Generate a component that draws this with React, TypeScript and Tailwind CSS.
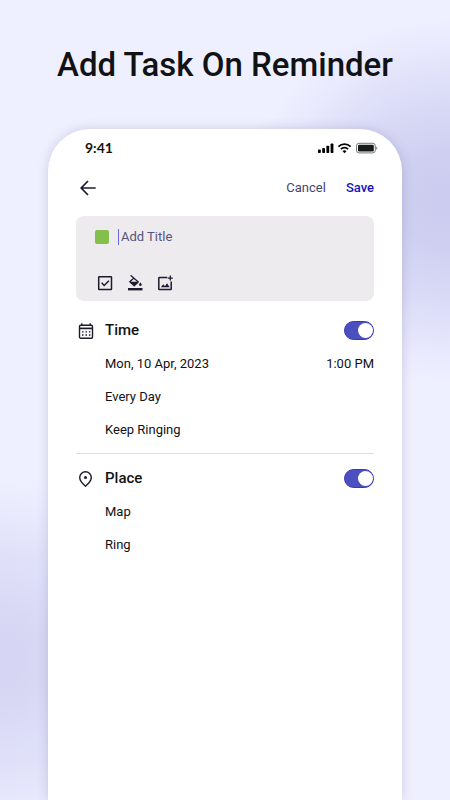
import { useState, type ReactNode } from "react";

const BackIcon = () => (
  <svg className="h-4 w-4" viewBox="0 0 16 16" fill="none" stroke="#1c1b2e" strokeWidth="1.7">
    <path d="M15.700 8H1.500M8 1L1.200 8 8 15" />
  </svg>
);

const CheckIcon = () => (
  <svg className="h-4 w-4" viewBox="0 0 16 16" fill="none" stroke="#1c1b2e" strokeWidth="1.5">
    <rect x="1.700" y="1.700" width="12.800" height="12.800" rx="0.600" />
    <path d="M4.600 7.800l2.600 2.700 4.700-4.700" />
  </svg>
);

const FillIcon = () => (
  <svg className="h-4 w-4" viewBox="0 0 16 16" fill="none" stroke="#1c1b2e" strokeWidth="1.3">
    <path d="M3.600 0.300L11.300 6.900 7.200 10.700 2.800 6.700 6.900 2.900" strokeLinejoin="round" />
    <path d="M2.900 6.700h8.200L7.200 10.500z" fill="#1c1b2e" stroke="none" />
    <path d="M13.400 7.600c0.900 1.100 1.300 1.700 1.300 2.200a1.300 1.300 0 0 1-2.600 0c0-0.500 0.400-1.100 1.300-2.200z" fill="#1c1b2e" stroke="none" />
    <path d="M1 14.200h14.500" strokeWidth="2.400" />
  </svg>
);

const AddPhotoIcon = () => (
  <svg className="h-4 w-4" viewBox="0 0 16 16" fill="none" stroke="#1c1b2e" strokeWidth="1.5">
    <path d="M10.300 2.400H2.400a0.600 0.600 0 0 0-0.600 0.600v11a0.600 0.600 0 0 0 0.600 0.600h11.200a0.600 0.600 0 0 0 0.600-0.600V6.600" />
    <path d="M13.300 0.600v5M10.800 3.100h5" strokeWidth="1.300" />
    <path d="M3.900 12.200l2.300-3 1.700 2 2.200-2.900 2.500 3.900z" fill="#1c1b2e" stroke="none" />
  </svg>
);

const CalendarIcon = () => (
  <svg className="h-4 w-4" viewBox="0 0 16 16" fill="none" stroke="#1c1b2e" strokeWidth="1.400">
    <rect x="1.500" y="2.200" width="13" height="13" rx="1.200" />
    <path d="M1.500 5.400h13" strokeWidth="1.700" />
    <path d="M3.800 0.200v2.400M12.200 0.200v2.400" />
    <path d="M4 8.900h8.400M4 12h8.400" strokeDasharray="1.500 1.950" />
  </svg>
);

const PinIcon = () => (
  <svg className="h-4 w-4" viewBox="0 0 16 16" fill="none" stroke="#1c1b2e" strokeWidth="1.400">
    <path d="M7.500 15.300C5 13.200 1.700 10 1.700 6.600A5.800 5.800 0 0 1 13.300 6.600C13.300 10 10 13.200 7.500 15.300Z" />
    <circle cx="7.500" cy="6.600" r="1.500" fill="#1c1b2e" stroke="none" />
  </svg>
);

const StatusIcons = () => (
  <svg className="h-3 w-[60px]" viewBox="0 0 60 12" fill="#000">
    <rect x="0" y="7.600" width="2.800" height="3.400" rx="0.700" />
    <rect x="4.200" y="6" width="2.800" height="5" rx="0.700" />
    <rect x="8.400" y="3.700" width="2.800" height="7.300" rx="0.700" />
    <rect x="12.600" y="1.500" width="2.800" height="9.500" rx="0.700" />
    <g fill="none" stroke="#000" strokeWidth="1.700">
      <path d="M20.400 4.600a8.700 8.700 0 0 1 12.200 0" />
      <path d="M22.900 7.200a5.100 5.100 0 0 1 7.200 0" />
    </g>
    <path d="M26.500 11.200l-2-2.100a2.900 2.900 0 0 1 4 0z" />
    <rect x="38.500" y="1.300" width="18.800" height="9.600" rx="2.500" fill="none" stroke="#777" />
    <rect x="40" y="2.800" width="15.800" height="6.600" rx="1.200" fill="#161c1b" />
    <path d="M58.200 4.400c1.700 0.600 1.700 2.800 0 3.400z" fill="#888" />
  </svg>
);

function Section({ id, title, icon, children }: { id: string; title: string; icon: ReactNode; children: ReactNode }) {
  const [enabled, setEnabled] = useState(true);

  return (
    <section>
      <div className="flex h-[33px] items-center">
        <span className="w-[29px] pl-0.5">{icon}</span>
        <label htmlFor={id} className="flex-1 text-[15px] font-medium">{title}</label>
        <input
          id={id}
          type="checkbox"
          role="switch"
          checked={enabled}
          onChange={(e) => setEnabled(e.target.checked)}
          className="flex h-[19px] w-[30px] cursor-pointer appearance-none items-center rounded-full border border-[#3838b8] bg-[#4c4fbf] before:h-[15px] before:w-[15px] before:rounded-full before:bg-white checked:justify-end"
        />
      </div>
      <div className="pl-[29px]">{children}</div>
    </section>
  );
}

function Row({ label, value }: { label: string; value?: string }) {
  return (
    <div className="flex h-[33px] items-center justify-between">
      <button type="button">{label}</button>
      {value && <button type="button">{value}</button>}
    </div>
  );
}

export default function App() {
  const [title, setTitle] = useState("");

  return (
    <div className="flex min-h-screen flex-col bg-[#eff0ff] bg-[radial-gradient(ellipse_210px_190px_at_100%_200px,#cacbef_0%,#cfcff1_25%,#dbdcf7_55%,#e9eafd_82%,transparent_100%),radial-gradient(ellipse_170px_190px_at_0%_660px,#d4d4f3_0%,#d8d8f5_25%,#e0e1f9_55%,#eaebfd_82%,transparent_100%)] px-12 font-[Roboto,sans-serif] text-[#111214]">
      <h1 className="flex h-[129px] items-center justify-center text-[33px] font-medium whitespace-nowrap">
        Add Task On Reminder
      </h1>

      <main className="flex-1 rounded-t-[42px] bg-white px-7 text-[13px] shadow-[0_0_12px_rgba(60,60,110,0.2)]">
        <div className="-mr-1 flex h-[37px] items-center justify-between pl-[9px]">
          <span className="font-[Lato,sans-serif] text-sm font-bold">9:41</span>
          <StatusIcons />
        </div>

        <header className="flex h-11 items-center gap-5">
          <button type="button" aria-label="Back" className="mr-auto pl-1">
            <BackIcon />
          </button>
          <button type="button" className="text-[#45456b]">Cancel</button>
          <button type="button" className="font-medium text-[#1414b8]">Save</button>
        </header>

        <div className="mt-1.5 rounded-lg bg-[#eeebef] px-[19px] pt-[10px] pb-[7px]">
          <div className="flex h-[22px] items-center">
            <button type="button" aria-label="Task color" className="h-[14px] w-[14px] rounded-xs bg-[#84be4c]" />
            <span className="ml-[9px] h-4 w-px bg-[#6868d8]" />
            <input
              type="text"
              aria-label="Title"
              placeholder="Add Title"
              value={title}
              onChange={(e) => setTitle(e.target.value)}
              className="min-w-0 flex-1 pl-0.5 outline-none placeholder:text-[#55557a]"
            />
          </div>
          <div className="mt-6 flex h-[22px] items-center gap-3.5 pl-0.5">
            <button type="button" aria-label="Add checklist"><CheckIcon /></button>
            <button type="button" aria-label="Fill color"><FillIcon /></button>
            <button type="button" aria-label="Add image"><AddPhotoIcon /></button>
          </div>
        </div>

        <div className="mt-[13px] border-b border-[#dddde0] pb-[7px]">
          <Section id="time" title="Time" icon={<CalendarIcon />}>
            <Row label="Mon, 10 Apr, 2023" value="1:00 PM" />
            <Row label="Every Day" />
            <Row label="Keep Ringing" />
          </Section>
        </div>
        <div className="pt-2">
          <Section id="place" title="Place" icon={<PinIcon />}>
            <Row label="Map" />
            <Row label="Ring" />
          </Section>
        </div>
      </main>
    </div>
  );
}
